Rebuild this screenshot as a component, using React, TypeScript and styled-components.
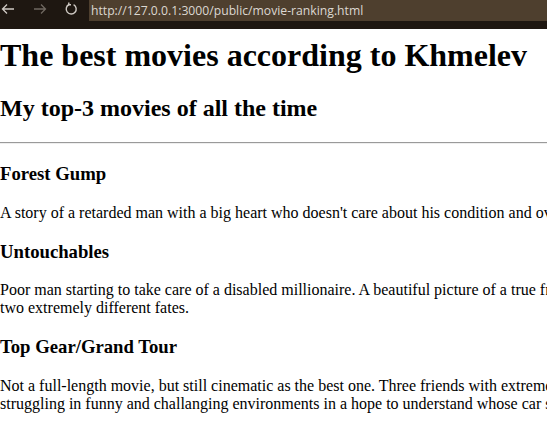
import React from "react";
import styled, { createGlobalStyle } from "styled-components";

const Global = createGlobalStyle`
  html, body { margin: 0; padding: 0; overflow: hidden; background: #fff; }
  body { font-family: "Liberation Serif", "Times New Roman", serif; color: #000; }
`;

const Toolbar = styled.div`
  display: flex;
  align-items: flex-start;
  gap: 17px;
  height: 29px;
  background: #1e1711;
  width: 547px;
`;

const NavButton = styled.div<{ $dim?: boolean }>`
  width: 15px;
  height: 18px;
  display: flex;
  align-items: center;
  justify-content: center;
  color: ${(p) => (p.$dim ? "#6f6860" : "#cfcac4")};
`;

const UrlField = styled.div`
  flex: 1;
  height: 21px;
  background: #4e3f2e;
  display: flex;
  align-items: center;
  padding-left: 2px;
  margin-left: -7px;
  font-family: "Open Sans", "Noto Sans", sans-serif;
  font-size: 12.2px;
  color: #dcd7d1;
  white-space: nowrap;
`;

const Page = styled.main`
  width: 630px;
  padding: 0;
`;

const Title = styled.h1`
  font-size: 32px;
  font-weight: bold;
  margin: 8px 0 21.44px;
`;

const Subtitle = styled.h2`
  font-size: 24px;
  font-weight: bold;
  margin: 19.92px 0;
`;

const Divider = styled.hr`
  margin: 8px 0;
  border: none;
  border-top: 1px solid #9a9a9a;
  border-bottom: 1px solid #eeeeee;
  height: 0;
`;

const MovieTitle = styled.h3`
  font-size: 18.72px;
  font-weight: bold;
  margin: 18.72px 0;
`;

const Description = styled.p`
  font-size: 16px;
  margin: 16px 0;
`;

const movies = [
  {
    title: "Forest Gump",
    text: "A story of a retarded man with a big heart who doesn't care about his condition and overcomes.",
  },
  {
    title: "Untouchables",
    text: "Poor man starting to take care of a disabled millionaire. A beautiful picture of a true friendship of two extremely different fates.",
  },
  {
    title: "Top Gear/Grand Tour",
    text: "Not a full-length movie, but still cinematic as the best one. Three friends with extreme hobbies struggling in funny and challanging environments in a hope to understand whose car sucks.",
  },
];

export default function App() {
  return (
    <>
      <Global />
      <Toolbar>
        <NavButton>
          <svg width="14" height="12" viewBox="0 0 14 12" fill="none" stroke="currentColor" strokeWidth="1.3">
            <path d="M13 6H1.5M6 1.5L1.5 6L6 10.5" />
          </svg>
        </NavButton>
        <NavButton $dim>
          <svg width="14" height="12" viewBox="0 0 14 12" fill="none" stroke="currentColor" strokeWidth="1.3">
            <path d="M1 6H12.5M8 1.5L12.5 6L8 10.5" />
          </svg>
        </NavButton>
        <NavButton>
          <svg width="13" height="14" viewBox="0 0 13 14" fill="none" stroke="currentColor" strokeWidth="1.4">
            <path d="M8.6 2.6A5 5 0 1 1 4 2.5" />
            <path d="M3.8 0.6V2.8H6" />
          </svg>
        </NavButton>
        <UrlField>http://127.0.0.1:3000/public/movie-ranking.html</UrlField>
      </Toolbar>
      <Page>
        <Title>The best movies according to Khmelev</Title>
        <Subtitle>My top-3 movies of all the time</Subtitle>
        <Divider />
        {movies.map((m) => (
          <section key={m.title}>
            <MovieTitle>{m.title}</MovieTitle>
            <Description>{m.text}</Description>
          </section>
        ))}
      </Page>
    </>
  );
}
